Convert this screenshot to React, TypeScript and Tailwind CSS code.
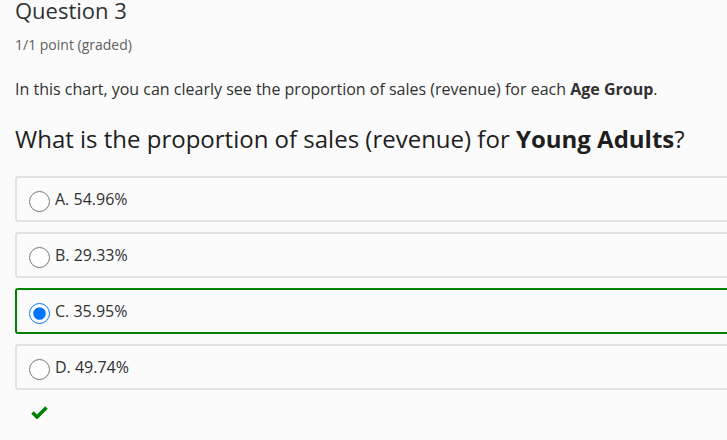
import { useState } from 'react'

const OPTIONS = [
  { id: 'a', label: 'A. 54.96%' },
  { id: 'b', label: 'B. 29.33%' },
  { id: 'c', label: 'C. 35.95%' },
  { id: 'd', label: 'D. 49.74%' },
]

export default function App() {
  const [picked, setPicked] = useState('c')

  return (
    <div
      className="min-h-[440px] w-[727px] overflow-hidden bg-[#fbfbfb] pl-[15px] text-[#313131]"
      style={{ fontFamily: '"Open Sans", "Noto Sans", sans-serif' }}
    >
      <h3 className="text-[22px] leading-[20px] font-normal text-[#313131]">Question 3</h3>
      <p className="mt-[17px] text-[14px] leading-[16px] text-[#5e5e5e]">1/1 point (graded)</p>

      <p className="mt-[26px] text-[16px] leading-[20px] text-[#313131]">
        In this chart, you can clearly see the proportion of sales (revenue) for each{' '}
        <strong className="font-bold">Age Group</strong>.
      </p>

      <p className="mt-[25px] whitespace-nowrap text-[24px] leading-[30px] text-[#1e1e1e]">
        What is the proportion of sales (revenue) for <strong className="font-bold">Young Adults</strong>?
      </p>

      {/* answer choices */}
      <div className="mt-[22px] flex w-[730px] flex-col gap-[10px]">
        {OPTIONS.map(o => {
          const on = picked === o.id
          return (
            <label
              key={o.id}
              className={`flex h-[46px] cursor-pointer items-center rounded-[3px] border-2 pl-3 pt-[5px]
                ${on ? 'border-[#008100]' : 'border-[#e2e2e2]'}`}
            >
              <input
                type="radio"
                name="q3"
                checked={on}
                onChange={() => setPicked(o.id)}
                className="m-0 h-[21px] w-[21px]"
              />
              <span className="mb-[6px] ml-[5px] text-[16px] leading-[20px] text-[#313131]">{o.label}</span>
            </label>
          )
        })}
      </div>

      <svg className="mt-[16px] ml-[16px]" width="17" height="13" viewBox="0 0 17 13">
        <path d="M1.5 6.5 L6 11 L15.5 1.5" fill="none" stroke="#008100" strokeWidth="3.6" />
      </svg>
    </div>
  )
}
